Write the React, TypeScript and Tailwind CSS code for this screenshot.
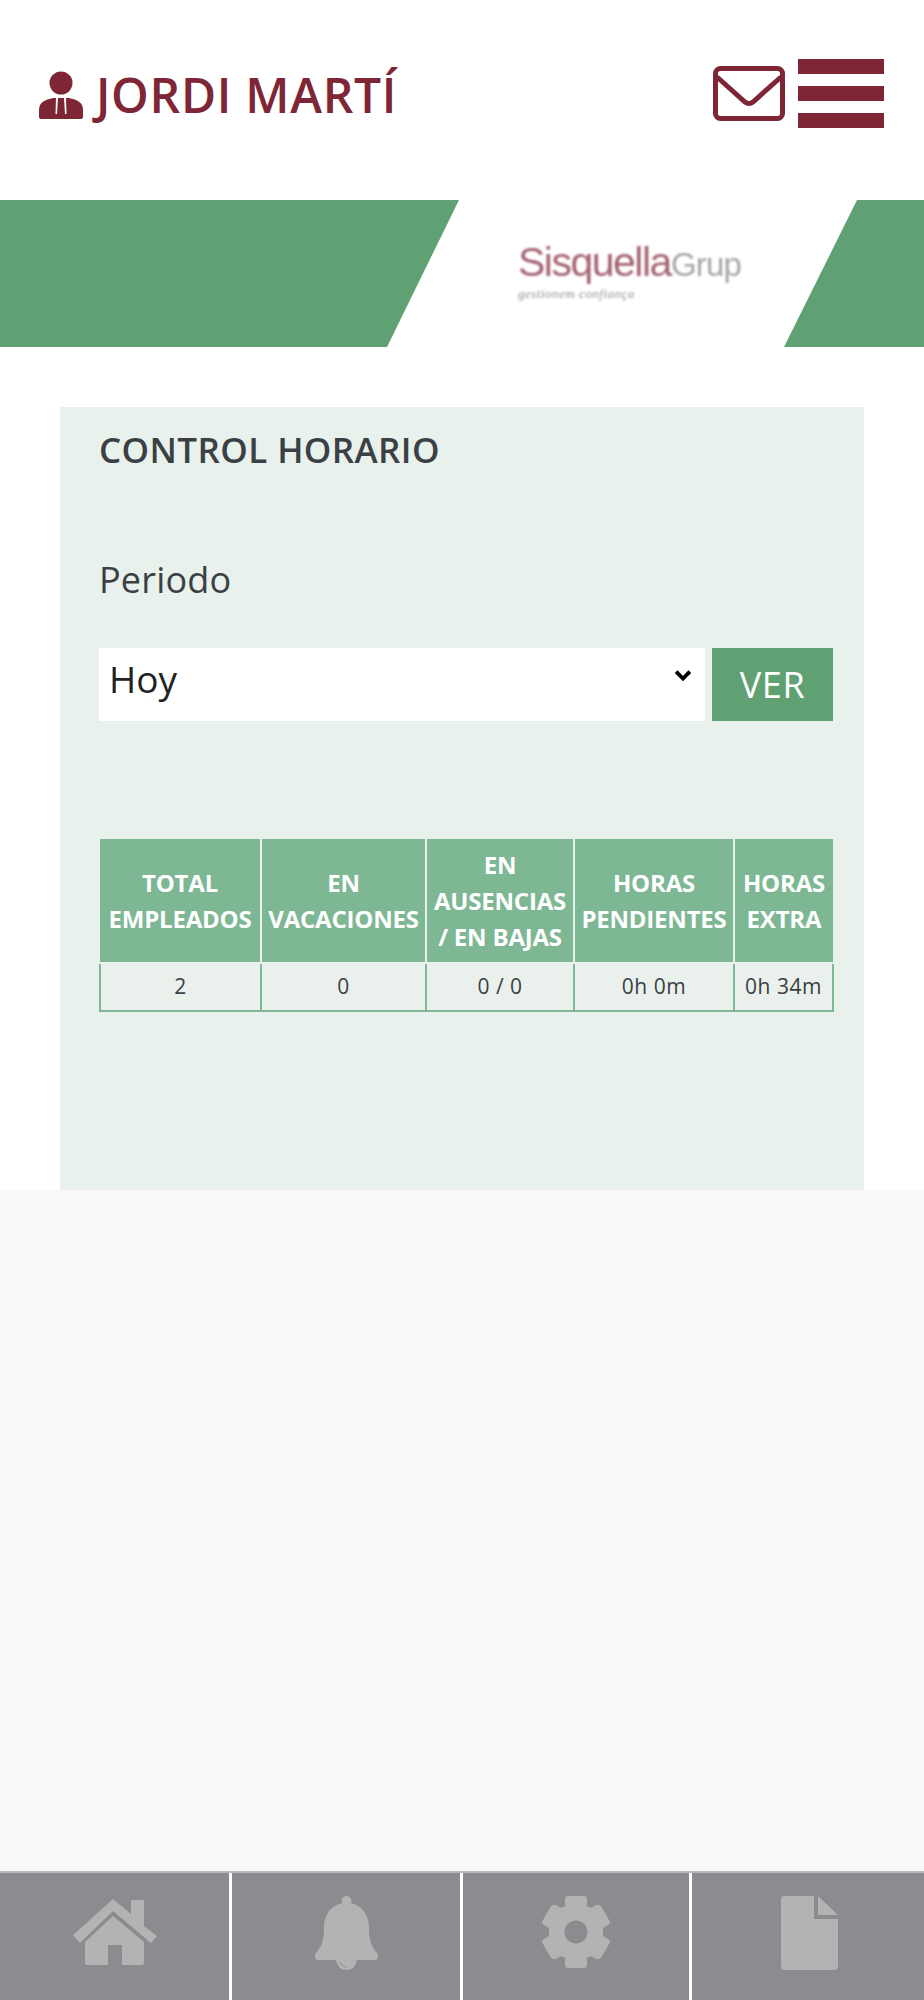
import React from "react";

function Person() {
  return (
    <svg viewBox="0 0 44 48" className="w-[44px] h-[48px] shrink-0" fill="#7e2636">
      <circle cx="22" cy="12" r="11.500" />
      <path d="M14 27 L30 27 C38 29 44 31 44 39 L44 46 C44 47 43 48 42 48 L2 48 C1 48 0 47 0 46 L0 39 C0 31 6 29 14 27 Z" />
      <path d="M17 27 L19 27 L18 43 L16.500 43 Z M25 27 L27 27 L27.500 43 L26 43 Z" fill="#ffffff" />
    </svg>
  );
}

function Envelope() {
  return (
    <svg viewBox="0 0 72 55" className="w-[72px] h-[55px] shrink-0" fill="none" stroke="#7e2636" strokeWidth="5">
      <rect x="2.500" y="2.500" width="67" height="50" rx="5" />
      <path d="M4 11 L32 36 Q36 39 40 36 L68 11" />
    </svg>
  );
}

function Hamburger() {
  return (
    <div className="flex flex-col gap-[12px] w-[86px] shrink-0">
      <div className="h-[15px] bg-[#7e2636]" />
      <div className="h-[15px] bg-[#7e2636]" />
      <div className="h-[15px] bg-[#7e2636]" />
    </div>
  );
}

function HomeIcon() {
  return (
    <svg viewBox="0 0 84 66" className="w-[84px] h-[66px]" fill="#b3b3b3">
      <path d="M40 0 L58 15 L58 1 L71 1 L71 27 L84 37 L78 44 L40 12 L7 44 L0 36 Z" />
      <path d="M40 17 L71 43 L71 64 Q71 66 69 66 L49 66 L49 46 L35 46 L35 66 L14 66 Q12 66 12 64 L12 43 Z" />
    </svg>
  );
}

function BellIcon() {
  return (
    <svg viewBox="0 0 65 74" className="w-[65px] h-[74px]" fill="#b3b3b3">
      <circle cx="32.500" cy="5" r="5" />
      <path d="M32.500 7 C18 7 10 18 10 32 C10 44 8 50 2 57 Q-1 63 4 64 L61 64 Q66 63 63 57 C57 50 55 44 55 32 C55 18 47 7 32.500 7 Z" />
      <path d="M22 64 Q24 74 32.500 74 Q41 74 43 64 Z" />
      <path d="M26 66 Q28 71 33 71" fill="none" stroke="#8b8c90" strokeWidth="1" />
    </svg>
  );
}

function GearIcon() {
  return (
    <svg viewBox="0 0 70 72" className="w-[70px] h-[72px]" fill="#b3b3b3">
      <path
        fillRule="evenodd"
        d="M27 0 L43 0 Q46 0 46 3 L46 10 L50 12 L55 9 Q58 8 60 10 L68 24 Q70 27 67 29 L62 32 L62 40 L67 43 Q70 45 68 48 L60 62 Q58 64 55 63 L50 60 L46 62 L46 69 Q46 72 43 72 L27 72 Q24 72 24 69 L24 62 L20 60 L15 63 Q12 64 10 62 L2 48 Q0 45 3 43 L8 40 L8 32 L3 29 Q0 27 2 24 L10 10 Q12 8 15 9 L20 12 L24 10 L24 3 Q24 0 27 0 Z M35 24.500 C28.600 24.500 23.500 29.600 23.500 36 C23.500 42.400 28.600 47.500 35 47.500 C41.400 47.500 46.500 42.400 46.500 36 C46.500 29.600 41.400 24.500 35 24.500 Z"
      />
    </svg>
  );
}

function FileIcon() {
  return (
    <svg viewBox="0 0 57 74" className="w-[57px] h-[74px]" fill="#b3b3b3">
      <path d="M3 0 L33 0 L33 23 L57 23 L57 70 Q57 74 53 74 L4 74 Q0 74 0 70 L0 3 Q0 0 3 0 Z" />
      <path d="M37 0 L57 19 L37 19 Z" />
    </svg>
  );
}

const headers = [
  { lines: ["TOTAL", "EMPLEADOS"], w: "w-[161px]" },
  { lines: ["EN", "VACACIONES"], w: "w-[165px]" },
  { lines: ["EN", "AUSENCIAS", "/ EN BAJAS"], w: "w-[148px]" },
  { lines: ["HORAS", "PENDIENTES"], w: "w-[160px]" },
  { lines: ["HORAS", "EXTRA"], w: "w-[99px]" },
];
const values = ["2", "0", "0 / 0", "0h 0m", "0h 34m"];

export default function App() {
  return (
    <div className="w-[924px] h-[2000px] flex flex-col bg-[#f9f9f9] overflow-hidden text-[#3a4044] font-['Open_Sans','Noto_Sans',sans-serif]">
      <div className="bg-white h-[1190px] flex flex-col shrink-0">
        <header className="h-[200px] shrink-0 flex items-start justify-between pl-[39px] pr-[40px]">
          <div className="flex items-center gap-[13px] mt-[71px]">
            <Person />
            <span className="text-[48px] leading-[48px] font-semibold text-[#7e2636] tracking-[0.7px]">JORDI MARTÍ</span>
          </div>
          <div className="flex items-center gap-[13px] mt-[59px]">
            <Envelope />
            <Hamburger />
          </div>
        </header>

        <div className="h-[147px] shrink-0 flex">
          <div className="w-[459px] bg-[#5fa172] [clip-path:polygon(0_0,100%_0,387px_100%,0_100%)]" />
          <div className="flex-1 relative -ml-[72px] min-w-0">
            <div className="ml-[131px] mt-[38px] w-[240px] opacity-80 blur-[0.8px]">
              <div className="font-['Liberation_Sans',sans-serif] text-[41px] leading-[48px] tracking-[-1.500px] whitespace-nowrap">
                <span className="text-[#8c3b4d]">Sisquella</span>
                <span className="text-[#8f8f92] text-[33px] tracking-[-0.800px]">Grup</span>
              </div>
              <div className="font-['Liberation_Serif',serif] italic text-[13px] leading-[14px] -mt-[2px] text-[#777] tracking-[0.5px]">gestionem confiança</div>
            </div>
          </div>
          <div className="w-[140px] bg-[#5fa172] [clip-path:polygon(73px_0,100%_0,100%_100%,0_100%)]" />
        </div>

        <main className="ml-[60px] w-[804px] mt-[60px] flex-1 bg-[#e8f1ec] pl-[39px] pr-[31px]">
          <h1 className="text-[35px] leading-[44px] font-semibold tracking-[0.4px] mt-[21px]">CONTROL HORARIO</h1>
          <p className="text-[36px] leading-[46px] mt-[85px] tracking-[0.2px]">Periodo</p>
          <div className="flex gap-[7px] mt-[45px] h-[73px]">
            <div className="w-[606px] bg-white relative pl-[10px] text-[37px] leading-[62px] text-[#222]">
              Hoy
              <svg viewBox="0 0 20 14" className="absolute right-[13px] top-[22px] w-[18px] h-[12px]" fill="none" stroke="#000" strokeWidth="4.500">
                <path d="M2 2 L10 10 L18 2" />
              </svg>
            </div>
            <button className="w-[121px] bg-[#5fa172] text-white text-[36px] leading-[73px] text-center tracking-[0.6px]">VER</button>
          </div>

          <table className="mt-[118px] w-[733px] table-fixed border-collapse">
            <thead>
              <tr>
                {headers.map((h, i) => (
                  <th key={i} className={`${h.w} h-[124px] bg-[#7db794] text-white text-[24px] leading-[36px] font-bold tracking-[-0.2px] p-0 border-r-2 border-b-2 border-[#e8f1ec] last:border-r-0 whitespace-nowrap`}>
                    {h.lines.map((l) => (
                      <div key={l}>{l}</div>
                    ))}
                  </th>
                ))}
              </tr>
            </thead>
            <tbody>
              <tr>
                {values.map((v, i) => (
                  <td key={i} className="h-[48px] bg-[#eaf1ed] text-center text-[21px] tracking-[0.5px] p-0 border-2 border-t-0 border-[#7db794] whitespace-nowrap">{v}</td>
                ))}
              </tr>
            </tbody>
          </table>
        </main>
      </div>

      <div className="flex-1" />

      <footer className="h-[129px] shrink-0 flex bg-[#8b8c90] border-t-2 border-[#b9babc]">
        <div className="w-[229px] flex justify-center pt-[26px]"><HomeIcon /></div>
        <div className="w-[231px] border-l-[3px] border-white flex justify-center pt-[23px]"><BellIcon /></div>
        <div className="w-[229px] border-l-[3px] border-white flex justify-center pt-[23px]"><GearIcon /></div>
        <div className="flex-1 border-l-[3px] border-white flex justify-start pl-[89px] pt-[23px]"><FileIcon /></div>
      </footer>
    </div>
  );
}
